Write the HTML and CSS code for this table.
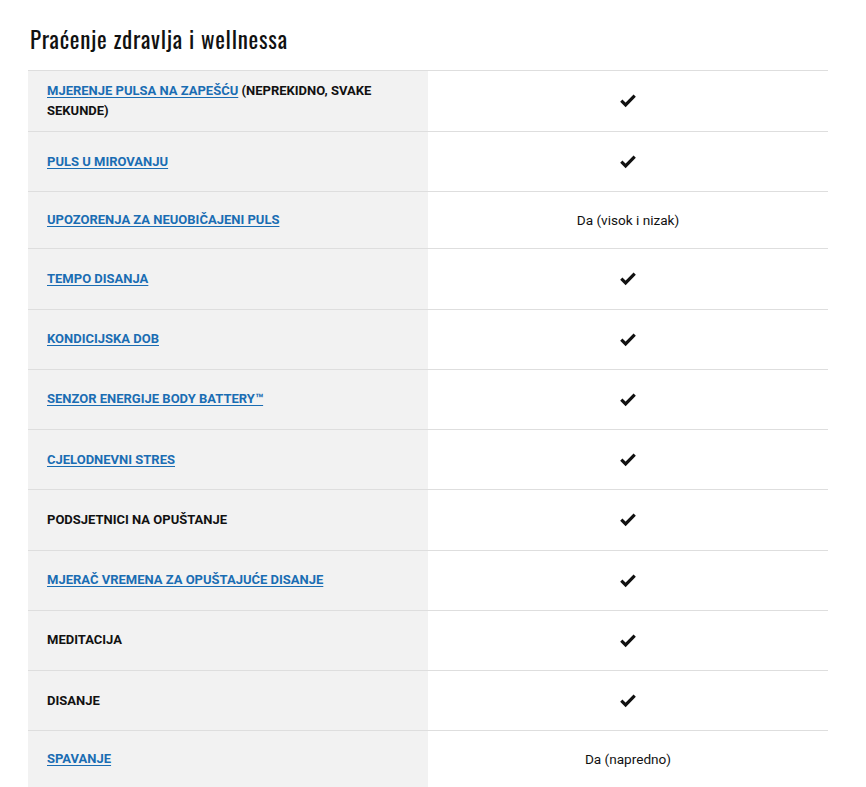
FILE: index.html
```html
<!DOCTYPE html>
<html lang="hr">
<head>
<meta charset="utf-8">
<title>Praćenje zdravlja i wellnessa</title>
<link rel="stylesheet" href="styles.css">
</head>
<body>
<section class="specs">
  <h2 class="specs-title">Praćenje zdravlja i wellnessa</h2>
  <div class="specs-table">
    <div class="row"><div class="name"><a href="#">MJERENJE PULSA NA ZAPEŠĆU</a> (NEPREKIDNO, SVAKE SEKUNDE)</div><div class="val"><svg class="check" viewBox="0 0 16 13"><path d="M1.3 6.6 L5.6 10.8 L14.7 1.6" /></svg></div></div>
    <div class="row"><div class="name"><a href="#">PULS U MIROVANJU</a></div><div class="val"><svg class="check" viewBox="0 0 16 13"><path d="M1.3 6.6 L5.6 10.8 L14.7 1.6" /></svg></div></div>
    <div class="row"><div class="name"><a href="#">UPOZORENJA ZA NEUOBIČAJENI PULS</a></div><div class="val text">Da (visok i nizak)</div></div>
    <div class="row"><div class="name"><a href="#">TEMPO DISANJA</a></div><div class="val"><svg class="check" viewBox="0 0 16 13"><path d="M1.3 6.6 L5.6 10.8 L14.7 1.6" /></svg></div></div>
    <div class="row"><div class="name"><a href="#">KONDICIJSKA DOB</a></div><div class="val"><svg class="check" viewBox="0 0 16 13"><path d="M1.3 6.6 L5.6 10.8 L14.7 1.6" /></svg></div></div>
    <div class="row"><div class="name"><a href="#">SENZOR ENERGIJE BODY BATTERY™</a></div><div class="val"><svg class="check" viewBox="0 0 16 13"><path d="M1.3 6.6 L5.6 10.8 L14.7 1.6" /></svg></div></div>
    <div class="row"><div class="name"><a href="#">CJELODNEVNI STRES</a></div><div class="val"><svg class="check" viewBox="0 0 16 13"><path d="M1.3 6.6 L5.6 10.8 L14.7 1.6" /></svg></div></div>
    <div class="row"><div class="name">PODSJETNICI NA OPUŠTANJE</div><div class="val"><svg class="check" viewBox="0 0 16 13"><path d="M1.3 6.6 L5.6 10.8 L14.7 1.6" /></svg></div></div>
    <div class="row"><div class="name"><a href="#">MJERAČ VREMENA ZA OPUŠTAJUĆE DISANJE</a></div><div class="val"><svg class="check" viewBox="0 0 16 13"><path d="M1.3 6.6 L5.6 10.8 L14.7 1.6" /></svg></div></div>
    <div class="row"><div class="name">MEDITACIJA</div><div class="val"><svg class="check" viewBox="0 0 16 13"><path d="M1.3 6.6 L5.6 10.8 L14.7 1.6" /></svg></div></div>
    <div class="row"><div class="name">DISANJE</div><div class="val"><svg class="check" viewBox="0 0 16 13"><path d="M1.3 6.6 L5.6 10.8 L14.7 1.6" /></svg></div></div>
    <div class="row"><div class="name"><a href="#">SPAVANJE</a></div><div class="val text">Da (napredno)</div></div>
  </div>
</section>
</body>
</html>
```
FILE: styles.css
```css
html, body {
  margin: 0;
  padding: 0;
  background: #fff;
}
body {
  font-family: Roboto, "Liberation Sans", Arial, sans-serif;
  color: #111;
}
.specs {
  width: 800px;
  padding: 26px 0 0 28px;
}
.specs-title {
  margin: 0 0 18px 2px;
  font-family: "Oswald", "Liberation Sans Narrow", "DejaVu Sans Condensed", sans-serif;
  font-weight: 400;
  font-size: 23px;
  line-height: 26px;
  letter-spacing: 0.75px;
  color: #111;
}
.specs-table {
  border-top: 1px solid #dedede;
}
.row {
  display: grid;
  grid-template-columns: 400px 400px;
  align-items: center;
  border-bottom: 1px solid #dedede;
  background: linear-gradient(to right, #f2f2f2 400px, #fff 400px);
}
.name {
  padding: 10px 19px;
  font-size: 13px;
  font-weight: 700;
  line-height: 20px;
  color: #111;
}
.name a {
  color: #1a6db3;
  text-decoration: underline;
  text-underline-offset: 2px;
}
.val {
  text-align: center;
  padding: 20px 0;
  font-size: 13.6px;
  line-height: 16px;
  font-weight: 400;
}
.check {
  display: block;
  margin: 0 auto;
  width: 16px;
  height: 19.25px;
  fill: none;
  stroke: #111;
  stroke-width: 3.2;
  stroke-linejoin: miter;
}
```
